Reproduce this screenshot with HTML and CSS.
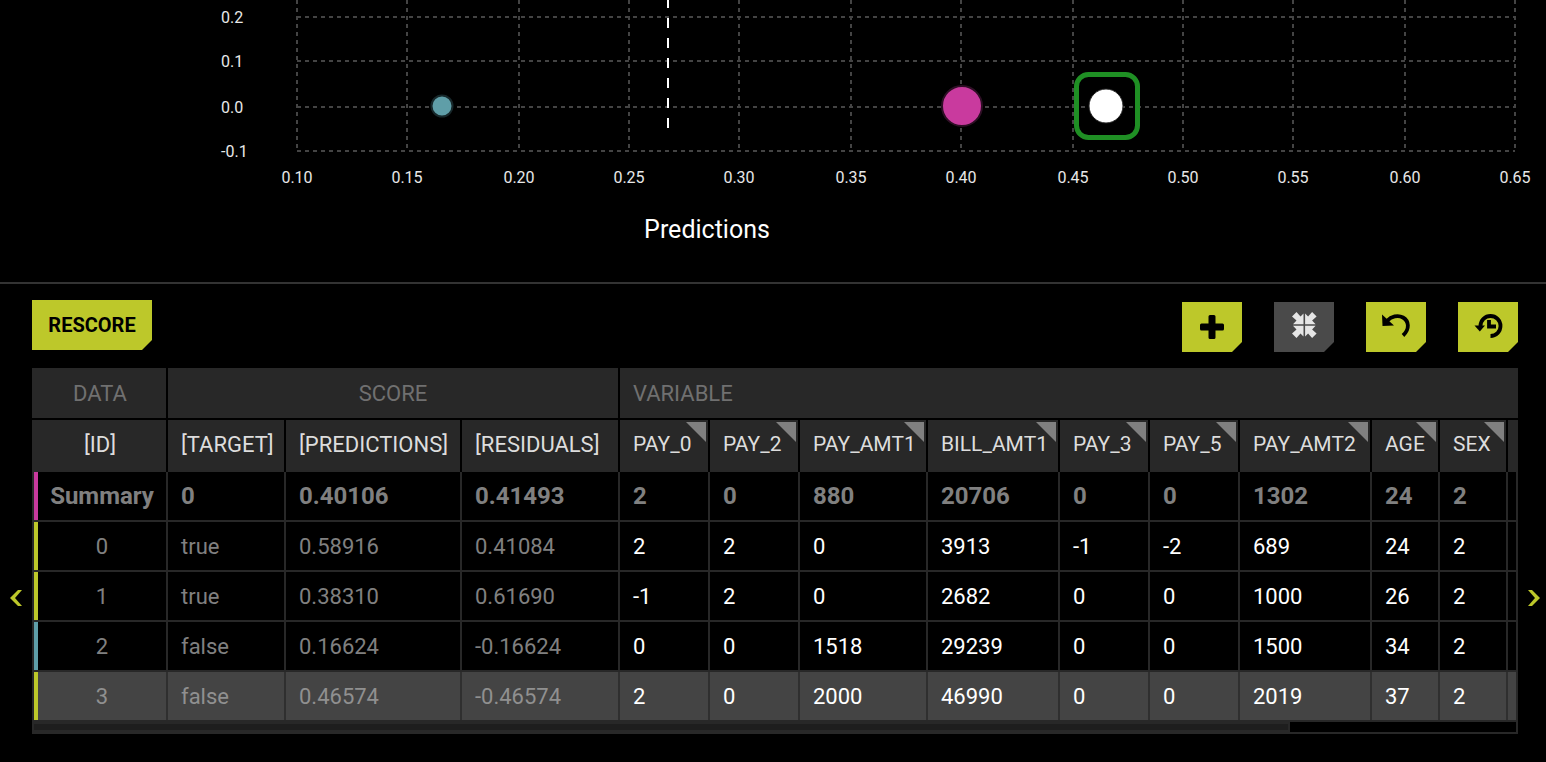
FILE: index.html
```html
<!DOCTYPE html>
<html>
<head>
	<meta name="viewport" content="width=device-width, initial-scale=1.0">
	<title>Predictions</title>
	<link rel="stylesheet" href="styles.css">
</head>
<body>
	<!-- scatter chart -->
	<div class="chart">
		<svg class="chart-svg" width="1546" height="282" viewBox="0 0 1546 282">
			<g class="grid">
				<path d="M297 0V151M407 0V151M519 0V151M629 0V151M739 0V151M851 0V151M961 0V151M1073 0V151M1183 0V151M1293 0V151M1405 0V151M1515 0V151"/>
				<path d="M297 17H1515M297 61H1515M297 107H1515M297 151H1515"/>
			</g>
			<line class="cutoff" x1="668" y1="-2" x2="668" y2="128"/>
			<g class="y-ticks">
				<text x="221" y="23">0.2</text>
				<text x="221" y="67">0.1</text>
				<text x="221" y="113">0.0</text>
				<text x="221" y="157">-0.1</text>
			</g>
			<g class="x-ticks">
				<text x="297" y="183">0.10</text>
				<text x="407" y="183">0.15</text>
				<text x="519" y="183">0.20</text>
				<text x="629" y="183">0.25</text>
				<text x="739" y="183">0.30</text>
				<text x="851" y="183">0.35</text>
				<text x="961" y="183">0.40</text>
				<text x="1073" y="183">0.45</text>
				<text x="1183" y="183">0.50</text>
				<text x="1293" y="183">0.55</text>
				<text x="1405" y="183">0.60</text>
				<text x="1515" y="183">0.65</text>
			</g>
			<text class="x-title" x="707" y="238">Predictions</text>
			<circle class="dot-teal" cx="442" cy="106" r="10.5"/>
			<circle class="dot-pink" cx="962" cy="106" r="20"/>
			<circle class="dot-white" cx="1106" cy="106" r="17"/>
			<rect class="selected-box" x="1076.5" y="74.5" width="61" height="63" rx="12"/>
		</svg>
	</div>

	<!-- toolbar -->
	<div class="toolbar">
		<button class="btn btn-text">RESCORE</button>
		<div class="tools">
			<button class="btn btn-icon">
				<svg width="26" height="26" viewBox="0 0 26 26"><path class="ico-fill" d="M9.5 2.5a1.5 1.5 0 0 1 1.5-1.5h4a1.5 1.5 0 0 1 1.5 1.5v7h7a1.5 1.5 0 0 1 1.5 1.5v4a1.5 1.5 0 0 1-1.500 1.500h-7v7a1.500 1.500 0 0 1-1.500 1.500h-4a1.500 1.500 0 0 1-1.500-1.500v-7h-7a1.500 1.500 0 0 1-1.500-1.500v-4a1.500 1.500 0 0 1 1.500-1.500h7z"/></svg>
			</button>
			<button class="btn btn-icon btn-off">
				<svg width="40" height="40" viewBox="-1 2 40 40"><path class="ico-light" d="M18.500 19.200V8.500L15.500 11.500 11.500 7 7 11.500 11.500 15.500 8 19.200zM20.100 19.200V8.500L23.100 11.500 27.100 7 31.600 11.500 27.100 15.500 30.600 19.200zM18.500 20.800V31.500L15.500 28.500 11.500 33 7 28.500 11.500 24.500 8 20.800zM20.100 20.800V31.500L23.100 28.500 27.100 33 31.600 28.500 27.100 24.500 30.600 20.800z"/></svg>
			</button>
			<button class="btn btn-icon">
				<svg width="40" height="40" viewBox="0 2 40 40"><path class="ico-fill" d="M6 9.500 6.500 21 18 20.500z"/><path class="ico-line" d="M11.500 15.500C15 11.500 22 9.500 27 12.500 33 16 34 24 27 30.500"/></svg>
			</button>
			<button class="btn btn-icon">
				<svg width="40" height="40" viewBox="0 2 40 40"><path class="ico-fill" d="M6.500 20.500H17L11.800 26.500z"/><path class="ico-line" d="M12.500 21A10 10 0 1 1 22.500 31"/><path class="ico-line" d="M21 15V21.500H28"/></svg>
			</button>
		</div>
	</div>

	<div class="table-wrap">
		<div class="pager pager-left">
			<svg width="12" height="16" viewBox="0 0 12 16"><path d="M8 0h4L5 8l7 8H8L0 8z"/></svg>
		</div>

		<!-- data table -->
		<div class="table">
			<div class="groups">
				<div class="group group-data">DATA</div>
				<div class="group group-score">SCORE</div>
				<div class="group group-var">VARIABLE</div>
			</div>

			<div class="row row-head">
				<div class="cell center">[ID]</div>
				<div class="cell">[TARGET]</div>
				<div class="cell">[PREDICTIONS]</div>
				<div class="cell">[RESIDUALS]</div>
				<div class="cell sort">PAY_0</div>
				<div class="cell sort">PAY_2</div>
				<div class="cell sort">PAY_AMT1</div>
				<div class="cell sort">BILL_AMT1</div>
				<div class="cell sort">PAY_3</div>
				<div class="cell sort">PAY_5</div>
				<div class="cell sort">PAY_AMT2</div>
				<div class="cell sort">AGE</div>
				<div class="cell sort">SEX</div>
				<div class="cell"></div>
			</div>

			<div class="row row-summary mark-pink">
				<div class="cell center dim">Summary</div>
				<div class="cell dim">0</div>
				<div class="cell dim">0.40106</div>
				<div class="cell dim">0.41493</div>
				<div class="cell dim">2</div>
				<div class="cell dim">0</div>
				<div class="cell dim">880</div>
				<div class="cell dim">20706</div>
				<div class="cell dim">0</div>
				<div class="cell dim">0</div>
				<div class="cell dim">1302</div>
				<div class="cell dim">24</div>
				<div class="cell dim">2</div>
				<div class="cell"></div>
			</div>

			<div class="row mark-yellow">
				<div class="cell center dim">0</div>
				<div class="cell dim">true</div>
				<div class="cell dim">0.58916</div>
				<div class="cell dim">0.41084</div>
				<div class="cell">2</div>
				<div class="cell">2</div>
				<div class="cell">0</div>
				<div class="cell">3913</div>
				<div class="cell">-1</div>
				<div class="cell">-2</div>
				<div class="cell">689</div>
				<div class="cell">24</div>
				<div class="cell">2</div>
				<div class="cell"></div>
			</div>

			<div class="row mark-yellow">
				<div class="cell center dim">1</div>
				<div class="cell dim">true</div>
				<div class="cell dim">0.38310</div>
				<div class="cell dim">0.61690</div>
				<div class="cell">-1</div>
				<div class="cell">2</div>
				<div class="cell">0</div>
				<div class="cell">2682</div>
				<div class="cell">0</div>
				<div class="cell">0</div>
				<div class="cell">1000</div>
				<div class="cell">26</div>
				<div class="cell">2</div>
				<div class="cell"></div>
			</div>

			<div class="row mark-teal">
				<div class="cell center dim">2</div>
				<div class="cell dim">false</div>
				<div class="cell dim">0.16624</div>
				<div class="cell dim">-0.16624</div>
				<div class="cell">0</div>
				<div class="cell">0</div>
				<div class="cell">1518</div>
				<div class="cell">29239</div>
				<div class="cell">0</div>
				<div class="cell">0</div>
				<div class="cell">1500</div>
				<div class="cell">34</div>
				<div class="cell">2</div>
				<div class="cell"></div>
			</div>

			<div class="row row-selected mark-yellow">
				<div class="cell center dim">3</div>
				<div class="cell dim">false</div>
				<div class="cell dim">0.46574</div>
				<div class="cell dim">-0.46574</div>
				<div class="cell">2</div>
				<div class="cell">0</div>
				<div class="cell">2000</div>
				<div class="cell">46990</div>
				<div class="cell">0</div>
				<div class="cell">0</div>
				<div class="cell">2019</div>
				<div class="cell">37</div>
				<div class="cell">2</div>
				<div class="cell"></div>
			</div>

			<!-- horizontal scrollbar -->
			<div class="scrollbar"><div class="scroll-thumb"></div></div>
		</div>

		<div class="pager pager-right">
			<svg width="12" height="16" viewBox="0 0 12 16"><path d="M4 0H0l7 8-7 8h4l8-8z"/></svg>
		</div>
	</div>
</body>
</html>
```

FILE: styles.css
```css
html, body {
	margin: 0;
	height: 762px;
	overflow: hidden;
	background-color: #000;
}

body {
	font-family: "Roboto", "Liberation Sans", sans-serif;
	color: #fff;
}

/* chart on top */
.chart {
	height: 282px;
	border-bottom: 2px solid #333;
}

.chart-svg {
	display: block;
}

.grid path {
	fill: none;
	stroke: #444;
	stroke-width: 2;
	stroke-dasharray: 4 4;
}

.cutoff {
	stroke: #fff;
	stroke-width: 2;
	stroke-dasharray: 10 10;
}

.y-ticks text, .x-ticks text {
	fill: #e8e8e8;
	font-size: 16px;
}

.x-ticks text {
	text-anchor: middle;
}

.x-title {
	fill: #fff;
	font-size: 25px;
	text-anchor: middle;
}

.dot-teal {
	fill: #5f9ea8;
	stroke: #17282b;
	stroke-width: 2;
}

.dot-pink {
	fill: #c93a9e;
	stroke: #2e0f25;
	stroke-width: 2;
}

.dot-white {
	fill: #fff;
	stroke: #222;
	stroke-width: 1;
}

.selected-box {
	fill: none;
	stroke: #1f8f24;
	stroke-width: 5;
}

/* buttons row */
.toolbar {
	display: flex;
	justify-content: space-between;
	align-items: flex-start;
	height: 84px;
	padding: 16px 28px 0 32px;
	box-sizing: border-box;
}

.tools {
	display: flex;
	gap: 32px;
	margin-top: 2px;
}

.btn {
	display: flex;
	align-items: center;
	justify-content: center;
	border: none;
	padding: 0;
	background-color: #bdc82a;
	color: #000;
	clip-path: polygon(0 0, 100% 0, 100% calc(100% - 10px), calc(100% - 10px) 100%, 0 100%);
}

.btn-text {
	width: 120px;
	height: 50px;
	font-family: inherit;
	font-size: 20px;
	font-weight: 700;
}

.btn-icon {
	width: 60px;
	height: 50px;
}

.btn-off {
	background-color: #4a4a4a;
}

.ico-fill {
	fill: #000;
}

.ico-line {
	fill: none;
	stroke: #000;
	stroke-width: 3.8;
}

.ico-light {
	fill: #e6e6e6;
}

/* table with side arrows */
.table-wrap {
	display: flex;
	align-items: flex-start;
}

.pager {
	padding-top: 222px;
	line-height: 0;
}

.pager svg {
	fill: #bdc82a;
}

.pager-left {
	box-sizing: border-box;
	width: 32px;
	padding-left: 10px;
}

.pager-right {
	padding-left: 10px;
}

.table {
	width: 1486px;
	box-sizing: border-box;
	border: 2px solid #282828;
	border-top: none;
	font-size: 22px;
}

.groups {
	display: grid;
	grid-template-columns: 132px 452px 896px;
	height: 50px;
	margin-left: -2px;
	width: 1484px;
	padding-left: 2px;
	box-sizing: content-box;
	background-color: #282828;
	border-bottom: 2px solid #000;
}

.group {
	display: flex;
	align-items: center;
	justify-content: center;
	padding-top: 1px;
	color: #707070;
}

.group-score {
	border-left: 2px solid #000;
}

.group-var {
	justify-content: flex-start;
	border-left: 2px solid #000;
	padding-left: 13px;
}

.row {
	display: grid;
	grid-template-columns: 134px 118px 176px 158px 90px 90px 128px 132px 90px 90px 132px 68px 68px 8px;
	height: 50px;
	box-sizing: border-box;
	border-bottom: 2px solid #282828;
}

.row-head {
	height: 52px;
	background-color: #282828;
	border-bottom: none;
	color: #ddd;
}

.row-selected {
	background-color: #444;
}

.row-selected .cell {
	border-right-color: #2f2f2f;
}

.row-selected .dim {
	color: #909090;
}

.cell {
	display: flex;
	align-items: center;
	padding-left: 13px;
	box-sizing: border-box;
	border-right: 2px solid #282828;
	position: relative;
	white-space: nowrap;
	overflow: hidden;
}

.cell:last-child {
	border-right: none;
	padding: 0;
}

.row-head .cell {
	padding-bottom: 4px;
	border-right-color: #000;
}

.center {
	justify-content: center;
	padding-left: 0;
}

.dim {
	color: #808080;
}

.row-summary .cell {
	font-size: 24px;
	font-weight: 700;
}

/* the first cell holds the coloured mark */
.mark-pink .cell:first-child {
	border-left: 4px solid #c93a9e;
}

.mark-yellow .cell:first-child {
	border-left: 4px solid #bdc82a;
}

.mark-teal .cell:first-child {
	border-left: 4px solid #5f9ea8;
}

/* sort corner in header */
.sort {
	font-size: 21px;
}

.sort::after {
	content: "";
	position: absolute;
	top: 2px;
	right: 2px;
	width: 20px;
	height: 20px;
	background-color: #808080;
	clip-path: polygon(0 0, 100% 0, 100% 100%);
}

.scrollbar {
	height: 10px;
	background-color: #000;
}

.scroll-thumb {
	width: 1254px;
	height: 6px;
	background-color: #1e1e1e;
	border: 2px solid #282828;
	border-left: none;
}
```
